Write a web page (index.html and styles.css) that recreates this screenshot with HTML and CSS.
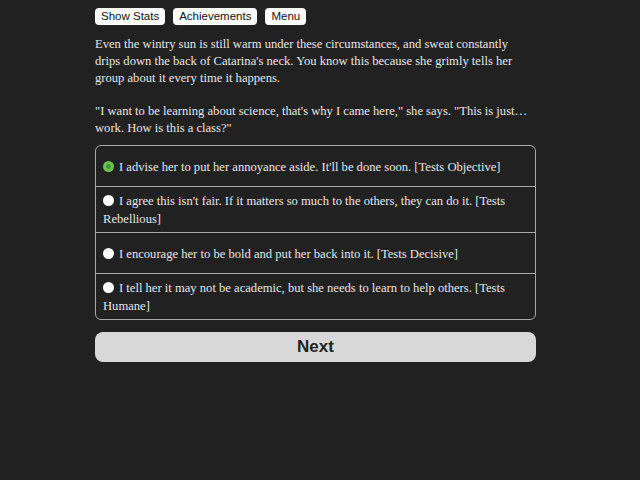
FILE: index.html
```html
<!DOCTYPE html>
<html>
<head>
<meta charset="utf-8">
<link rel="stylesheet" href="styles.css">
</head>
<body>
<div class="page">
  <div class="topbar">
    <button class="tbtn">Show Stats</button>
    <button class="tbtn">Achievements</button>
    <button class="tbtn">Menu</button>
  </div>
  <div class="story">
    <p>Even the wintry sun is still warm under these circumstances, and sweat constantly drips down the back of Catarina's neck. You know this because she grimly tells her group about it every time it happens.</p>
    <p>"I want to be learning about science, that's why I came here," she says. "This is just… work. How is this a class?"</p>
  </div>
  <form class="choices">
    <label class="choice"><span class="ctext"><span class="radio checked"></span>I advise her to put her annoyance aside. It'll be done soon. [Tests Objective]</span></label>
    <label class="choice"><span class="ctext"><span class="radio"></span>I agree this isn't fair. If it matters so much to the others, they can do it. [Tests Rebellious]</span></label>
    <label class="choice"><span class="ctext"><span class="radio"></span>I encourage her to be bold and put her back into it. [Tests Decisive]</span></label>
    <label class="choice"><span class="ctext"><span class="radio"></span>I tell her it may not be academic, but she needs to learn to help others. [Tests Humane]</span></label>
  </form>
  <button class="next">Next</button>
</div>
</body>
</html>
```
FILE: styles.css
```css
html, body {
  margin: 0;
  padding: 0;
  background: #212121;
}
body {
  color: #e6e6e6;
  font-family: "Liberation Serif", serif;
}
.page {
  width: 441px;
  margin-left: 95px;
  padding-top: 8px;
}
.topbar {
  display: flex;
  gap: 8px;
}
.tbtn {
  background: #fff;
  color: #111;
  border: none;
  border-radius: 4px;
  font-family: "Liberation Sans", sans-serif;
  font-size: 11.5px;
  height: 17px;
  padding: 0 6px;
  line-height: 17px;
}
.story {
  margin-top: 11px;
  font-size: 12.6px;
  line-height: 17px;
}
.story p {
  margin: 0 0 8px 0;
}
.story p + p {
  margin-top: 16px;
}
.choices {
  border: 1px solid #a9a9a9;
  border-radius: 6px;
  margin-top: 8px;
  font-size: 12.6px;
  line-height: 18px;
}
.choice {
  display: flex;
  align-items: center;
  min-height: 31px;
  padding: 5px 8px 4px 7px;
  border-top: 1px solid #a9a9a9;
}
.choice:first-child {
  border-top: none;
}
.radio {
  display: inline-block;
  width: 11px;
  height: 11px;
  border-radius: 50%;
  background: #fff;
  margin-right: 5px;
  vertical-align: -1px;
  box-sizing: border-box;
}
.radio.checked {
  background: #4caf50;
  border: 3px solid #6cc24a;
  box-shadow: inset 0 0 0 2px #3b9a3e;
}
.next {
  display: block;
  width: 100%;
  margin-top: 12px;
  height: 30px;
  border: none;
  border-radius: 8px;
  background: #d8d8d8;
  color: #222;
  font-family: "Liberation Sans", sans-serif;
  font-weight: bold;
  font-size: 17px;
}
```
